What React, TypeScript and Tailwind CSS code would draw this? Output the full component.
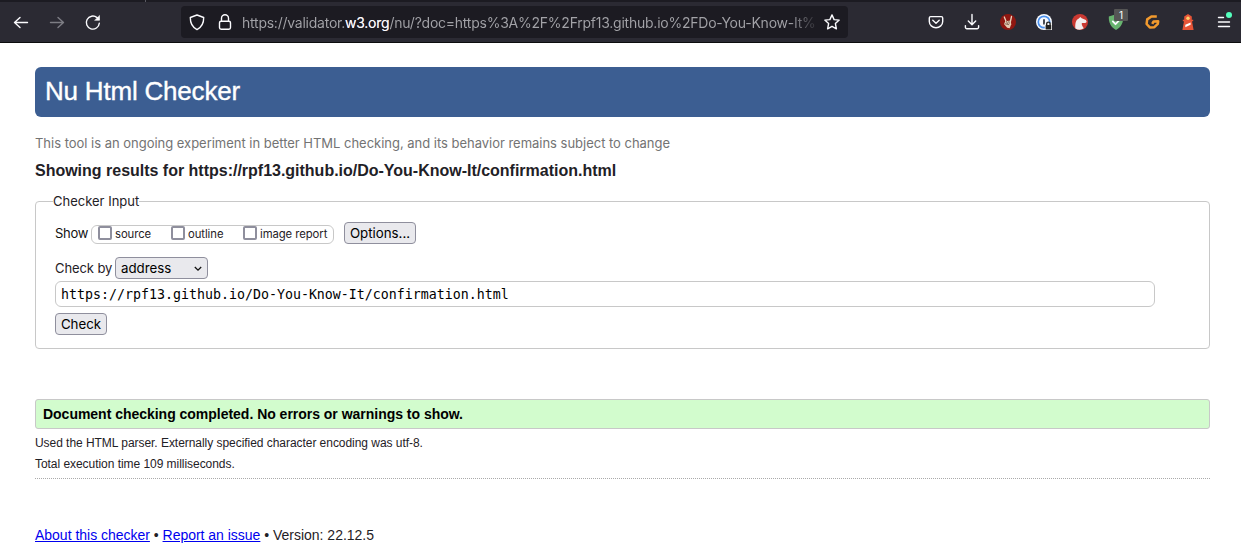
import type { ReactNode } from "react";

const stroke = {
  fill: "none",
  stroke: "#fbfbfe",
  strokeWidth: 1.4,
  strokeLinecap: "round" as const,
  strokeLinejoin: "round" as const,
};

function Icon({ children, className = "" }: { children: ReactNode; className?: string }) {
  return (
    <svg viewBox="0 0 16 16" className={`size-4 shrink-0 overflow-visible ${className}`} {...stroke}>
      {children}
    </svg>
  );
}

function Toolbar() {
  return (
    <header className="h-[43px] border-b border-[#0c0c0d] bg-[#2b2a33]">
      <div className="flex h-[2px] bg-[#1c1b22]">
        <div className="ml-[145px] w-px bg-[#5a5a62]" />
      </div>
      <div className="flex h-10 items-center">
        <Icon className="ml-[13px]">
          <path d="M14.5 8.5H1.5M7 3.5l-5.5 5 5.5 5" />
        </Icon>
        <Icon className="ml-5 opacity-40">
          <path d="M1.5 8.5h13M9 3.5l5.5 5-5.5 5" />
        </Icon>
        <Icon className="ml-5">
          <path d="M14.3 9.2a6.5 6.5 0 1 1-2.3-5.6l1.6 1.6" />
          <path d="M14.5 1.8v4.5H10z" fill="#fbfbfe" strokeWidth="0.6" />
        </Icon>
        <div className="ml-[80px] flex h-8 w-[667px] items-center rounded bg-[#1c1b22]">
          <Icon className="ml-[8px]">
            <path d="M8 1 14.7 3.5C14.8 8.6 13 13 8 15.6 3 13 1.2 8.6 1.3 3.5z" />
          </Icon>
          <Icon className="ml-[12px]">
            <rect x="2.5" y="7.2" width="11" height="8" rx="1.6" />
            <path d="M4.5 7V4.2a3.5 3.5 0 0 1 7 0V7" />
          </Icon>
          <div className="mt-[2px] ml-[9px] w-[576px] whitespace-nowrap bg-linear-to-r from-[#a3a3a8] from-95% to-[#2a2930] bg-clip-text font-[Inter,sans-serif] text-[14px] leading-5 tracking-[-0.24px] text-transparent">
            https://validator.<span className="text-[#fbfbfe]">w3.org</span>/nu/?doc=https%3A%2F%2Frpf13.github.io%2FDo-You-Know-It%
          </div>
          <Icon className="ml-[6px]">
            <path d="m8 .9 2.1 4.7 5.1.5-3.8 3.5 1 5.2L8 12.3l-4.4 2.5 1-5.2L.8 6.1l5.1-.5z" />
          </Icon>
        </div>
        <Icon className="ml-[80px]">
          <path d="M2.7 2.6h10.6a1.4 1.4 0 0 1 1.4 1.4v3.5a6.7 6.2 0 0 1-13.4 0V4a1.4 1.4 0 0 1 1.4-1.4z" />
          <path d="m4.8 6.2 3.2 3 3.2-3" />
        </Icon>
        <Icon className="ml-5">
          <path d="M8 .5v10M4.3 7 8 10.7 11.7 7M1.4 11.6v1.6A1.5 1.5 0 0 0 2.9 14.7h10.2a1.5 1.5 0 0 0 1.5-1.5v-1.6" />
        </Icon>
        <Icon className="ml-5">
          <circle cx="8" cy="8" r="8" fill="#8f1711" stroke="none" />
          <path d="M4.3 3 6.5 8.5M11.5 2.5 10.3 8" stroke="#ead5bf" strokeWidth="1.3" />
          <path d="m5.3 7.2 5.4-.6.5 3.6-1.5 4-2.6-.4L4 10z" fill="#e5cdb4" stroke="none" />
          <path d="m6.6 7.5.8 2M8.8 7l.4 2.3M5.2 9.8l3.5.8" stroke="#623a2b" strokeWidth=".7" />
        </Icon>
        <Icon className="ml-5">
          <circle cx="8" cy="8" r="8" fill="#f7faff" stroke="none" />
          <circle cx="8" cy="8" r="5.7" stroke="#4b91ee" strokeWidth="1.7" />
          <path d="M8 5.2v5.4" stroke="#333842" strokeWidth="1.8" strokeLinecap="butt" />
          <path d="M8.8 9.2h7.2v6.8H8.8z" fill="#f4f4f4" stroke="none" />
          <path d="M10.7 11V9.8a1.7 1.7 0 0 1 3.4 0V11" stroke="#222" />
          <rect x="9.6" y="11" width="5.6" height="4.4" rx=".5" fill="#222" stroke="none" />
        </Icon>
        <Icon className="ml-5">
          <circle cx="8" cy="8" r="8" fill="#ca3932" stroke="none" />
          <path d="M3.4 14.4C3 10.6 3.4 5.7 6.8 4.4L8.3 3l1.4 1.3 4.2 1.8.8 1.8-1.4 1.2-3.5-.2c-.5 2 1.3 4.2 2 5.4-2.4 1.9-5.8 1.8-8.4.1z" fill="#f3eeee" stroke="none" />
        </Icon>
        <div className="relative ml-5">
          <Icon>
            <path d="M8 .2 15.2 2.5C15.5 8.3 13.4 13 8 16 2.6 13 .5 8.3.8 2.5z" fill="#68b36f" stroke="none" />
            <path d="m4.8 7.4 2.7 2.8L11.5 6" strokeWidth="1.8" />
          </Icon>
          <span className="absolute -top-[5px] left-[6px] flex h-3 w-[14px] items-center justify-center rounded-[1px] bg-[#555] font-[Inter,sans-serif] text-[10px] leading-3 text-white">1</span>
        </div>
        <Icon className="ml-5">
          <path d="M12.8 2.6 7.4 2.5 3.2 5.4 2.6 10l3.2 3.4 4.6-.2 3.4-3.3.4-2.6-4.6.2-1.4 2.3" stroke="#f29a2e" strokeWidth="2.5" strokeLinejoin="round" strokeLinecap="butt" />
        </Icon>
        <Icon className="ml-5">
          <path d="M8 0 11.8 2.6v3.2h1.4v1.5H12l1.6 8.7H2.4L4 7.3H2.8V5.8h1.4V2.6z" fill="#e65437" stroke="none" />
          <circle cx="8" cy="4.3" r="1.7" fill="#ffd36b" stroke="none" />
          <path d="m5.3 10.7 5.3-2.3v2.3l-5.3 2.5z" fill="#fff" stroke="none" />
        </Icon>
        <div className="relative ml-5">
          <Icon>
            <path d="M2.5 3.5h5M2.5 8h11M2.5 12.5h11" />
          </Icon>
          <span className="absolute -top-[2px] left-[10px] size-1.5 rounded-full bg-[#54ffbd]" />
        </div>
      </div>
    </header>
  );
}

function Option({ label, className }: { label: string; className: string }) {
  return (
    <label className={`flex items-center ${className}`}>
      <span className="mr-[3px] size-[14px] rounded-[2px] border-2 border-[#8f8f9d] bg-white" />
      <span className="pt-[3px] text-[11.3px] leading-4 tracking-[-0.07px]">{label}</span>
    </label>
  );
}

function CheckerForm() {
  return (
    <fieldset className="mt-3 h-[156px] rounded-[4px] border border-[#c8c8c8] pl-[19px] font-[Inter,sans-serif] text-[13px] text-[#1f2126]">
      <legend className="-ml-[2px] h-4 text-[13px] leading-4">Checker Input</legend>
      <div className="mt-[13px] flex h-[22px] items-center">
        <span className="w-[36px] pt-px tracking-[-0.3px] text-[#111]">Show</span>
        <div className="mt-[2px] flex h-[19px] w-[243px] items-center rounded-[6px] border border-[#c8c8c8] pb-[3px]">
          <Option label="source" className="ml-[6px] w-[73px]" />
          <Option label="outline" className="w-[72px]" />
          <Option label="image report" className="whitespace-nowrap" />
        </div>
        <button className="ml-[10px] h-[22px] w-[72px] rounded-[4px] border border-[#8f8f9d] bg-[#e9e9ed] pt-px text-[13.3px] text-black">Options...</button>
      </div>
      <div className="mt-[13px] flex h-[22px] items-center">
        <span className="w-[60px] pt-px whitespace-nowrap tracking-[-0.1px]">Check by</span>
        <div className="flex h-[22px] w-[93px] items-center justify-between rounded-[4px] border border-[#8f8f9d] bg-[#e9e9ed] pt-px pr-[5px] pl-[5px] text-[13.3px] text-black">
          address
          <svg viewBox="0 0 8 6" className="h-[6px] w-2" fill="none" stroke="#111" strokeWidth="1.3">
            <path d="m.8 1 3.2 3.2L7.2 1" />
          </svg>
        </div>
      </div>
      <div className="mt-[2px] flex h-[26px] w-[1100px] items-center rounded-[6px] border border-[#c8c8c8] pt-[2px] pl-[5px] font-['DejaVu_Sans_Mono',monospace] text-[13.29px] text-black">
        https://rpf13.github.io/Do-You-Know-It/confirmation.html
      </div>
      <button className="mt-[6px] block h-[22px] w-[52px] rounded-[4px] border border-[#8f8f9d] bg-[#e9e9ed] pt-px text-[13.3px] text-black">Check</button>
    </fieldset>
  );
}

export default function App() {
  return (
    <div className="h-[553px] overflow-hidden bg-white font-['Liberation_Sans',Arial,sans-serif] text-[#1f2126]">
      <Toolbar />
      <main className="w-[1210px] pt-[24px] pl-[35px]">
        <h1 className="h-[50px] rounded-[6px] bg-[#3c5e92] pl-[10px] text-[26px] leading-[48px] tracking-[-0.2px] text-white [-webkit-text-stroke:0.35px_white]">Nu Html Checker</h1>
        <p className="mt-[17px] font-[Inter,sans-serif] text-[13px] leading-[18px] tracking-[-0.02px] text-[#737373]">
          This tool is an ongoing experiment in better HTML checking, and its behavior remains subject to change
        </p>
        <h2 className="mt-[9px] text-[16px] leading-5 font-bold tracking-[-0.01px]">
          Showing results for https://rpf13.github.io/Do-You-Know-It/confirmation.html
        </h2>
        <CheckerForm />
        <div className="mt-[50px] flex h-[30px] items-center rounded-[3px] border border-[#c8c8c8] bg-[#d2fccd] pl-[7px] text-[14px] font-bold tracking-[-0.02px] text-black">
          Document checking completed. No errors or warnings to show.
        </div>
        <p className="mt-[6px] text-[12px] leading-4 tracking-[-0.045px]">Used the HTML parser. Externally specified character encoding was utf-8.</p>
        <p className="mt-[5px] text-[12px] leading-4 tracking-[-0.045px]">Total execution time 109 milliseconds.</p>
        <hr className="mt-[6px] border-t border-dotted border-[#aaa]" />
        <footer className="mt-[46px] text-[14px] leading-5 tracking-[-0.015px]">
          <a className="text-[#0000ee] underline">About this checker</a> • <a className="text-[#0000ee] underline">Report an issue</a> • Version: 22.12.5
        </footer>
      </main>
    </div>
  );
}
